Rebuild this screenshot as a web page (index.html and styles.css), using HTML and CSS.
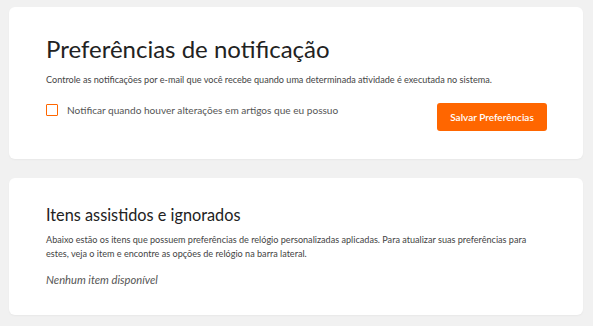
FILE: index.html
```html
<!DOCTYPE html>
<html lang="pt-BR">
<head>
    <meta charset="UTF-8">
    <meta name="viewport" content="width=device-width, initial-scale=1.0">
    <title>Preferências de notificação</title>
    <link rel="stylesheet" href="styles.css">
</head>
<body>
    <div class="card notify-card">
        <h1>Preferências de notificação</h1>
        <p class="desc">Controle as notificações por e-mail que você recebe quando uma determinada atividade é executada no sistema.</p>
        <div class="notify-row">
            <label class="check">
                <span class="box"></span>
                <span>Notificar quando houver alterações em artigos que eu possuo</span>
            </label>
            <button class="btn-save">Salvar Preferências</button>
        </div>
    </div>

    <div class="card watch-card">
        <h2>Itens assistidos e ignorados</h2>
        <p class="desc">Abaixo estão os itens que possuem preferências de relógio personalizadas aplicadas. Para atualizar suas preferências para estes, veja o item e encontre as opções de relógio na barra lateral.</p>
        <p class="empty">Nenhum item disponível</p>
    </div>
</body>
</html>
```

FILE: styles.css
```css
body {
    margin: 0;
    padding: 7px 10px 9px 9px;
    background: #f1f1f1;
    font-family: Lato, "Open Sans", Arial, sans-serif;
    color: #333;
}
.card {
    background: #fff;
    border-radius: 6px;
    box-shadow: 0 1px 2px rgba(0, 0, 0, 0.04);
}
.notify-card {
    height: 152px;
    box-sizing: border-box;
    padding: 26px 36px 0 37px;
}
.watch-card {
    margin-top: 19px;
    height: 137px;
    box-sizing: border-box;
    padding: 26px 36px 0 37px;
}
h1 {
    margin: 0;
    font-size: 24px;
    font-weight: 400;
    color: #222;
    line-height: 32px;
}
h2 {
    margin: 0;
    font-size: 16.3px;
    font-weight: 400;
    color: #222;
    line-height: 22px;
}
.desc {
    margin: 8px 0 0;
    font-size: 9.1px;
    line-height: 14px;
    color: #444;
}
.watch-card .desc {
    margin-top: 7px;
}
.notify-row {
    display: flex;
    justify-content: space-between;
    align-items: flex-start;
    margin-top: 16px;
}
.check {
    display: flex;
    align-items: center;
    gap: 9px;
    font-size: 10.1px;
    line-height: 14px;
    color: #555;
}
.box {
    width: 10px;
    height: 10px;
    border: 1px solid #ff6600;
    border-radius: 1px;
}
.btn-save {
    width: 110px;
    height: 28px;
    border: none;
    border-radius: 3px;
    background: #ff6600;
    color: #fff;
    font-family: inherit;
    font-size: 10px;
    font-weight: 600;
}
.empty {
    margin: 11px 0 0;
    font-size: 11.2px;
    line-height: 15px;
    font-style: italic;
    color: #555;
}
```
